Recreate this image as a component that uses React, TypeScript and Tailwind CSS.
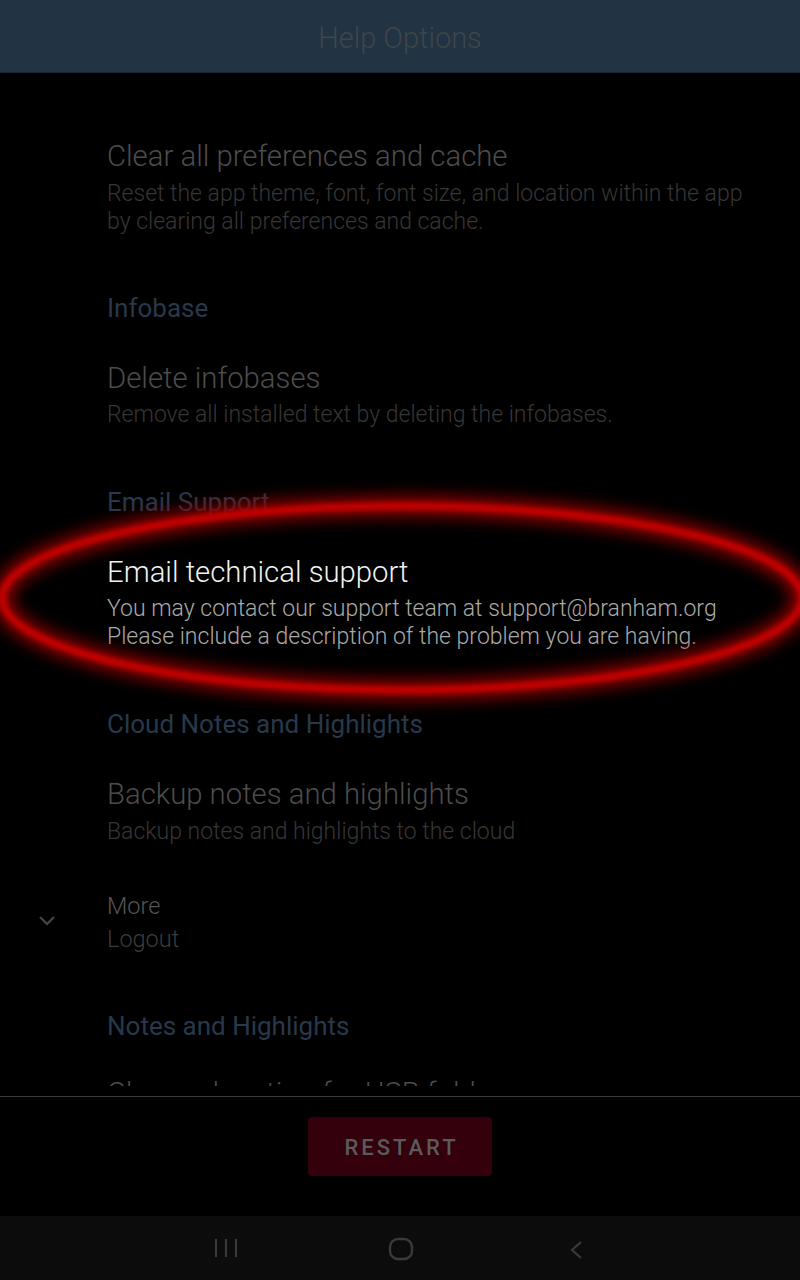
import React from "react";

const font = { fontFamily: "Roboto, 'Noto Sans', sans-serif" };

export default function App() {
  return (
    <div className="relative w-[800px] h-[1280px] bg-black overflow-hidden flex flex-col" style={font}>
      {/* header */}
      <div className="h-[73px] shrink-0 bg-[#223343] border-b border-[#1a2630] flex items-center justify-center">
        <span className="text-[29px] font-light text-[#3f454a] leading-none mt-[4px]">Help Options</span>
      </div>

      {/* list */}
      <div className="h-[1013px] shrink-0 overflow-hidden pl-[107px] pr-[20px] font-light">
        <div className="mt-[65px] text-[29.3px] leading-[36px] text-[#4c4c4c]">Clear all preferences and cache</div>
        <div className="mt-[6px] text-[23px] leading-[28px] text-[#363636]">
          Reset the app theme, font, font size, and location within the app
          <br />
          by clearing all preferences and cache.
        </div>

        <div className="mt-[54px] text-[26px] leading-[36px] text-[#27394b] font-normal">Infobase</div>

        <div className="mt-[34px] text-[29.3px] leading-[36px] text-[#4c4c4c]">Delete infobases</div>
        <div className="mt-[5px] text-[23px] leading-[28px] text-[#363636]">
          Remove all installed text by deleting the infobases.
        </div>

        <div className="mt-[55px] text-[26px] leading-[36px] text-[#27394b] font-normal">Email Support</div>

        <div className="mt-[34px] text-[29.3px] leading-[36px] text-[#f2f2f2]">Email technical support</div>
        <div className="mt-[5px] text-[23px] leading-[28px] text-[#a9a9a9]">
          You may contact our support team at support@branham.org
          <br />
          Please include a description of the problem you are having.
        </div>

        <div className="mt-[55px] text-[26px] leading-[36px] text-[#27394b] font-normal">
          Cloud Notes and Highlights
        </div>

        <div className="mt-[34px] text-[29.3px] leading-[36px] text-[#4c4c4c]">Backup notes and highlights</div>
        <div className="mt-[6px] text-[23px] leading-[28px] text-[#363636]">
          Backup notes and highlights to the cloud
        </div>

        <div className="relative mt-[44px]">
          <svg
            className="absolute left-[-69px] top-[25px]"
            width="18"
            height="12"
            viewBox="0 0 18 12"
            fill="none"
          >
            <polyline points="2,2 9,9 16,2" stroke="#474747" strokeWidth="2" />
          </svg>
          <div className="text-[23.5px] leading-[33px] text-[#555555]">More</div>
          <div className="text-[23.5px] leading-[33px] text-[#3c3c3c]">Logout</div>
        </div>

        <div className="mt-[52px] text-[26px] leading-[36px] text-[#27394b] font-normal">Notes and Highlights</div>

        <div className="mt-[31px] text-[29.3px] leading-[36px] text-[#4c4c4c]">Change location for USB folder</div>
      </div>

      {/* bottom */}
      <div className="h-[10px] shrink-0" />
      <div className="h-[1px] shrink-0 bg-[#3c3c3c]" />
      <div className="flex-1 flex justify-center pt-[20px]">
        <div className="w-[184px] h-[59px] rounded-[4px] bg-[#33000b] flex items-center justify-center">
          <span className="text-[22px] font-medium tracking-[3px] text-[#5a5a5a] leading-none mt-[2px] ml-[3px]">
            RESTART
          </span>
        </div>
      </div>

      {/* nav bar */}
      <div className="h-[64px] shrink-0 bg-[#0c0c0c] relative">
        <svg className="absolute left-[212px] top-[20px]" width="28" height="24" viewBox="0 0 28 24" fill="none">
          <line x1="4" y1="3" x2="4" y2="21" stroke="#3a3a3a" strokeWidth="2.2" />
          <line x1="14" y1="3" x2="14" y2="21" stroke="#3a3a3a" strokeWidth="2.2" />
          <line x1="24" y1="3" x2="24" y2="21" stroke="#3a3a3a" strokeWidth="2.2" />
        </svg>
        <svg className="absolute left-[387px] top-[20px]" width="28" height="26" viewBox="0 0 28 26" fill="none">
          <rect x="3" y="3" width="22" height="20" rx="8" stroke="#3a3a3a" strokeWidth="2.4" />
        </svg>
        <svg className="absolute left-[566px] top-[24px]" width="20" height="20" viewBox="0 0 20 20" fill="none">
          <polyline points="15,2 6,10 15,18" stroke="#3a3a3a" strokeWidth="2.2" />
        </svg>
      </div>

      {/* red annotation ellipse */}
      <svg
        className="absolute left-0 top-0 pointer-events-none"
        width="800"
        height="1280"
        viewBox="0 0 800 1280"
      >
        <defs>
          <filter id="glow" x="-20%" y="-50%" width="140%" height="200%">
            <feGaussianBlur stdDeviation="8" />
          </filter>
          <filter id="soft" x="-20%" y="-50%" width="140%" height="200%">
            <feGaussianBlur stdDeviation="2.5" />
          </filter>
        </defs>
        <ellipse cx="402" cy="598" rx="400" ry="92" fill="none" stroke="#8a0000" strokeWidth="20" filter="url(#glow)" />
        <ellipse cx="402" cy="598" rx="400" ry="92" fill="none" stroke="#cc0000" strokeWidth="7" filter="url(#soft)" />
      </svg>
    </div>
  );
}
